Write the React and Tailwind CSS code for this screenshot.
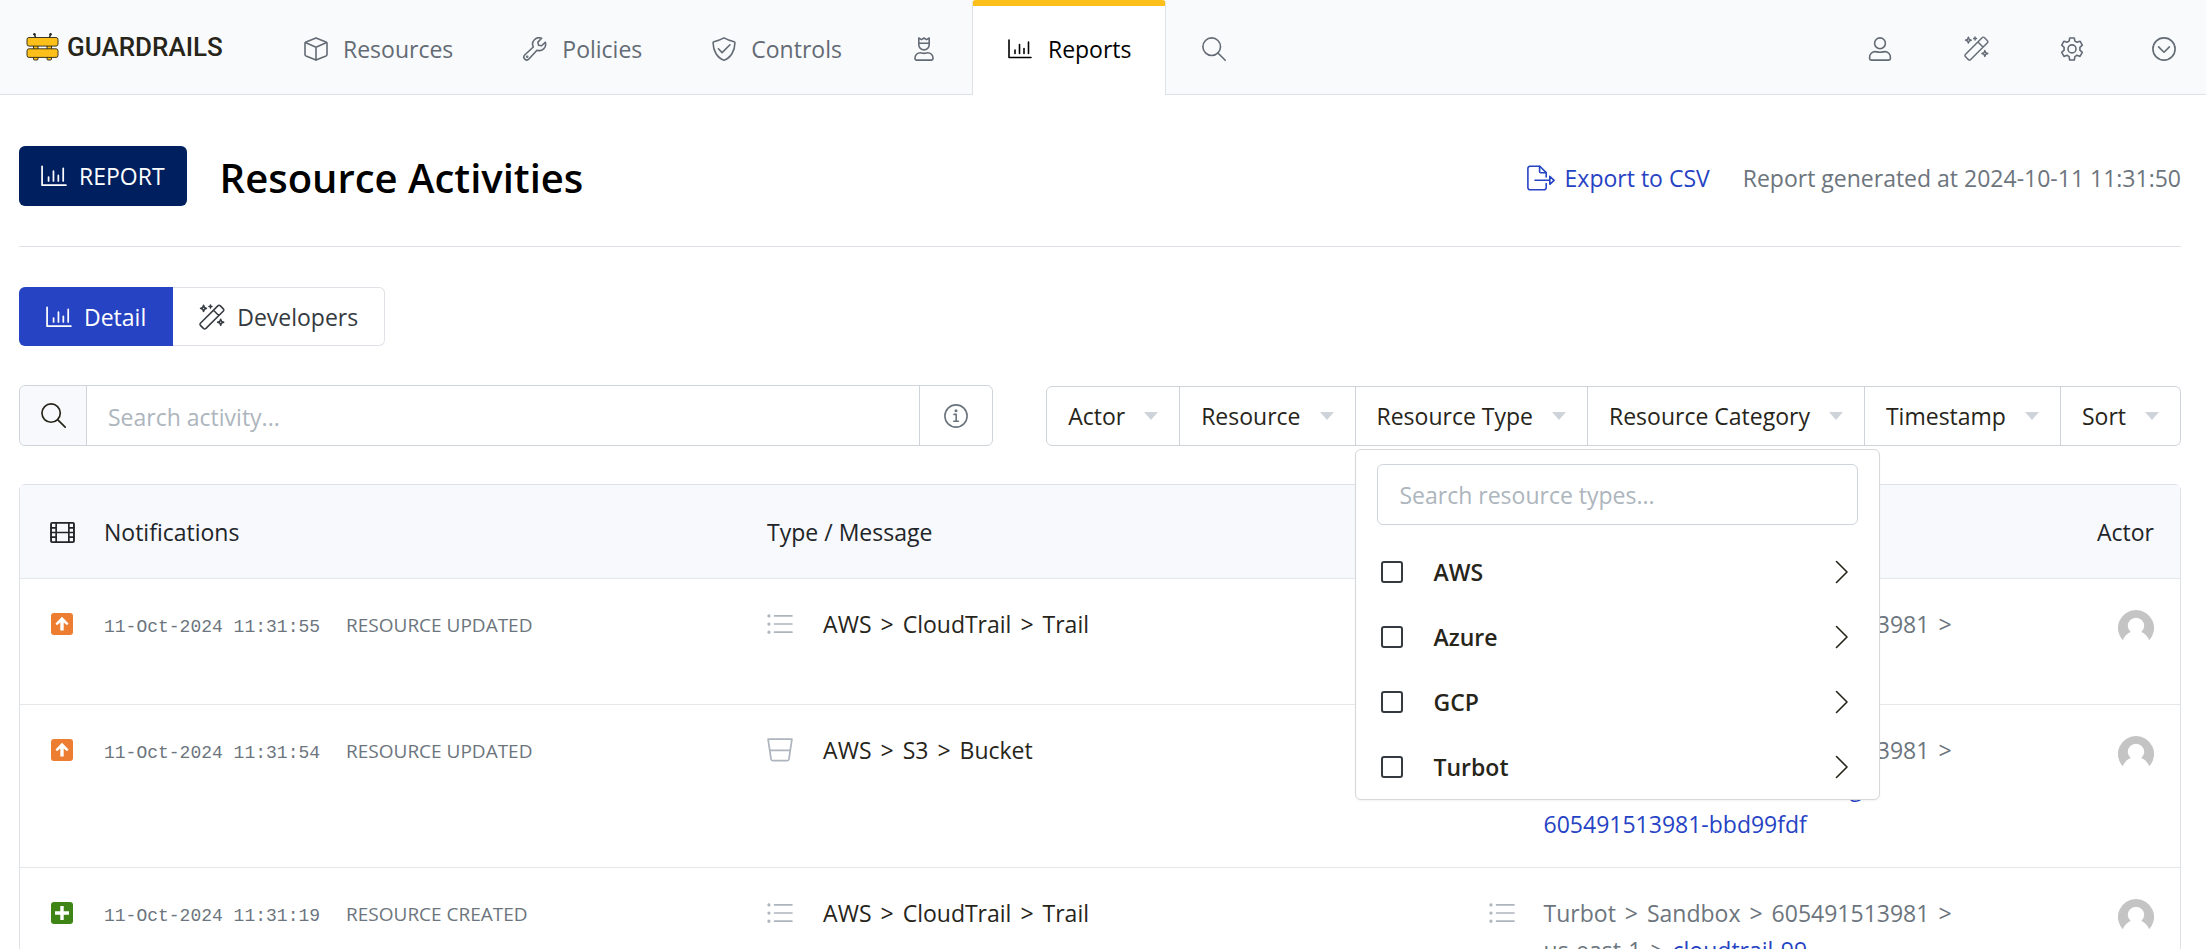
import React from "react";

function Icon({ children, className = "size-6", width = 1.6 }) {
  return (
    <svg
      viewBox="0 0 24 24"
      className={`shrink-0 ${className}`}
      fill="none"
      stroke="currentColor"
      strokeWidth={width}
      strokeLinecap="round"
      strokeLinejoin="round"
      aria-hidden="true"
    >
      {children}
    </svg>
  );
}

const CubeIcon = (p) => (
  <Icon {...p}>
    <path d="M12 .9 22 4.9c.6.3 1 .8 1 1.400v11.200c0 .7-.4 1.200-1 1.500L12 23.100l-10-4.100c-.6-.3-1-.8-1-1.500V6.300c0-.6.4-1.100 1-1.400z" />
    <path d="M1.400 5.500 12 10.200l10.600-4.700M12 10.200v12.700" />
  </Icon>
);

const WrenchIcon = (p) => (
  <Icon {...p}>
    <path d="M22.300 5.200a6.400 6.400 0 0 1-8.300 8L5.900 22a2.900 2.900 0 0 1-4.200-4L10.300 10A6.400 6.400 0 0 1 18.600 1.300l-3.700 3.800.6 3.100 3.100.6z" />
    <circle cx="4.200" cy="19.800" r=".5" />
  </Icon>
);

const ShieldIcon = (p) => (
  <Icon {...p}>
    <path d="M12 .9c3.200 1.800 6.600 3 10.100 3.900.5.100.8.500.8 1C23 14 18.500 21 12 23.200 5.500 21 1 14 1.100 5.800c0-.5.3-.9.800-1C5.400 3.900 8.800 2.700 12 .9z" />
    <path d="m6.400 11.800 3.700 3.800L18 7.800" />
  </Icon>
);

const CrownUserIcon = (p) => (
  <Icon {...p}>
    <path d="M6.800 1v6.700a5.200 5.200 0 0 0 10.400 0V1l-2.700 1.600L12 1 9.500 2.600zM6.800 6.200h10.400" />
    <path d="M8.300 15.700c1.300 0 1.600.7 3.700.7s2.400-.7 3.700-.7c2.900 0 5.300 2.300 5.300 5.300v.6c0 .9-.7 1.500-1.500 1.500h-15c-.8 0-1.500-.6-1.500-1.500V21c0-3 2.400-5.300 5.300-5.300z" />
  </Icon>
);

const ChartIcon = (p) => (
  <Icon {...p}>
    <path d="M1 3v17.500h22M7 16.500v-3.500M11.500 16.500v-9M16 16.500v-5M20.500 16.500V5" />
  </Icon>
);

const SearchIcon = (p) => (
  <Icon {...p}>
    <circle cx="9.700" cy="9.700" r="8.800" />
    <path d="m16.200 16.200 7 7" />
  </Icon>
);

const UserIcon = (p) => (
  <Icon {...p}>
    <circle cx="12" cy="6.300" r="5.400" />
    <path d="M7.200 14.600c1.400 0 2.200.7 4.800.7s3.400-.7 4.800-.7c3.100 0 5.600 2.500 5.600 5.600v1.300c0 .9-.7 1.600-1.600 1.600H3.200c-.9 0-1.600-.7-1.600-1.600v-1.300c0-3.100 2.500-5.600 5.600-5.600z" />
  </Icon>
);

const WandIcon = (p) => (
  <Icon {...p} width={1.4}>
    <path d="M17.600 1.500 1.300 17.800a1.300 1.300 0 0 0 0 1.900l3 3a1.300 1.300 0 0 0 1.900 0L22.500 6.400a1.300 1.300 0 0 0 0-1.900l-3-3a1.300 1.300 0 0 0-1.900 0zM13.400 5.800l4.800 4.800" />
    <path d="m4.200 1.200.8 2 2 .8-2 .8-.8 2-.8-2-2-.8 2-.8zM20 14l.8 2 2 .8-2 .8-.8 2-.8-2-2-.8 2-.8zM10.600 1v2.800M9.200 2.400H12" />
  </Icon>
);

const GearIcon = (p) => (
  <Icon {...p}>
    <path d="M9.700 1h4.600l.6 3.100 2.100 1.200 3-1.100 2.300 4-2.400 2.100v2.900l2.400 2.200-2.300 4-3-1.100-2.100 1.300-.6 3.400H9.700l-.6-3.400L7 18.300l-3 1.100-2.300-4 2.400-2.200v-2.900L1.700 8.200l2.300-4 3 1.100 2.100-1.200z" />
    <circle cx="12" cy="11.900" r="4" />
  </Icon>
);

const CircleDownIcon = (p) => (
  <Icon {...p}>
    <circle cx="12" cy="12" r="11.100" />
    <path d="m6.600 9.900 5.400 5.300 5.400-5.300" />
  </Icon>
);

const InfoIcon = (p) => (
  <Icon {...p}>
    <circle cx="12" cy="12" r="11.100" />
    <path d="M10 10.400h2.200v6.600M9.800 17.200h4.600" />
    <circle cx="12" cy="6.800" r=".7" fill="currentColor" />
  </Icon>
);

const ExportIcon = () => (
  <svg
    viewBox="0 0 28 26"
    className="h-[26px] w-7 shrink-0"
    fill="none"
    stroke="currentColor"
    strokeWidth="1.600"
    strokeLinecap="round"
    strokeLinejoin="round"
    aria-hidden="true"
  >
    <path d="M19.200 12V7.600L12.800 1.200H3A2.100 2.100 0 0 0 .9 3.300v19.400A2.100 2.100 0 0 0 3 24.800h14.100a2.100 2.100 0 0 0 2.100-2.100V18.500" />
    <path d="M12.600 1.400v5.200c0 .7.500 1.200 1.200 1.200h5.200M8 15.300h14.800M22.800 11.300v8l4.300-4z" />
  </svg>
);

const FilmIcon = (p) => (
  <Icon {...p}>
    <rect x="1" y="2.800" width="22" height="18.400" rx="1" strokeWidth="1.800" />
    <path d="M5.900 3v18M18.100 3v18M6 12h12M1 7.500h5M1 12h5M1 16.500h5M18 7.500h5M18 12h5M18 16.500h5" />
  </Icon>
);

const ListIcon = (p) => (
  <Icon {...p}>
    <path d="M7 4.500h16M7 12h16M7 19.500h16" />
    <g fill="currentColor" strokeWidth="1">
      <circle cx="1.800" cy="4.500" r="1" />
      <circle cx="1.800" cy="12" r="1" />
      <circle cx="1.800" cy="19.500" r="1" />
    </g>
  </Icon>
);

const BucketIcon = (p) => (
  <Icon {...p}>
    <path d="M1 2h22l-2.700 18.300a1.700 1.700 0 0 1-1.700 1.500H5.400a1.700 1.700 0 0 1-1.700-1.500zM2.700 12.400h18.600" />
  </Icon>
);

const ChevronIcon = (p) => (
  <Icon {...p}>
    <path d="m6.500 1.500 10.500 10.500L6.500 22.500" />
  </Icon>
);

function UpdatedBadge() {
  return (
    <svg viewBox="0 0 22 22" className="size-[22px]" aria-hidden="true">
      <rect width="22" height="22" rx="3" fill="#ed7d31" />
      <path d="M11 3.800 17.500 10.600 16 12.200l-3.300-2.600v7.900H9.300V9.600L6 12.200l-1.500-1.600z" fill="#fff" />
    </svg>
  );
}

function CreatedBadge() {
  return (
    <svg viewBox="0 0 22 22" className="size-[22px]" aria-hidden="true">
      <rect width="22" height="22" rx="3" fill="#3f8515" />
      <path d="M9.300 4h3.400v5.300H18v3.400h-5.300V18H9.300v-5.300H4V9.300h5.300z" fill="#fff" />
    </svg>
  );
}

function Avatar() {
  return (
    <svg viewBox="0 0 36 36" className="ml-auto size-9" role="img" aria-label="Actor">
      <path
        d="M18 0a18 18 0 0 0-13.200 30.300C6.300 26.400 9.200 23.400 12.700 22.100a8.200 8.200 0 1 1 10.600 0c3.500 1.300 6.400 4.300 7.900 8.200A18 18 0 0 0 18 0z"
        fill="#c4c4c4"
      />
    </svg>
  );
}

function Logo() {
  return (
    <a href="#" className="flex items-center gap-2 text-[#27251a]" aria-label="Guardrails">
      <svg viewBox="0 0 33 28" className="h-7 w-[33px]" aria-hidden="true">
        <path d="M9.500 4.500 8.500 1.200M23.500 4.500l1-3.300" stroke="#27251a" strokeWidth="1.400" />
        <circle cx="8.400" cy="1.300" r="1.200" fill="#27251a" />
        <circle cx="24.600" cy="1.300" r="1.200" fill="#27251a" />
        <g fill="#fdc01a" stroke="#27251a" strokeWidth=".9">
          <rect x="7.500" y="12" width="4.500" height="15" rx="1" />
          <rect x="21" y="12" width="4.500" height="15" rx="1" />
          <rect x="1" y="4.500" width="31" height="8.600" rx="2" />
          <rect x="1" y="15.800" width="31" height="8.600" rx="2" />
        </g>
      </svg>
      <span className="font-[Roboto] text-[26px] leading-8 font-medium">GUARDRAILS</span>
    </a>
  );
}

function NavItem({ icon, label, name }) {
  return (
    <a href="#" aria-label={name} className="flex items-center gap-[13px] px-[34px] pt-[3px]">
      <span className="flex w-7 justify-center">{icon}</span>
      {label}
    </a>
  );
}

function Header() {
  return (
    <header className="flex h-[95px] border-b border-[#dee2e6] bg-[#f9fafc] text-[#636b74]">
      <div className="flex w-[268px] shrink-0 items-center pl-[26px]">
        <Logo />
      </div>
      <nav className="flex grow">
        <NavItem icon={<CubeIcon />} label="Resources" />
        <NavItem icon={<WrenchIcon />} label="Policies" />
        <NavItem icon={<ShieldIcon />} label="Controls" />
        <NavItem icon={<CrownUserIcon />} name="Directory" />
        <a
          href="#"
          aria-current="page"
          className="-mb-px flex items-center gap-3.5 rounded-t border-x border-t-6 border-x-[#dee2e6] border-t-[#fdc01a] bg-white px-[33px] pb-1 text-black"
        >
          <span className="flex w-7 justify-center">
            <ChartIcon />
          </span>
          Reports
        </a>
        <NavItem icon={<SearchIcon />} name="Search" />
      </nav>
      <nav className="flex" aria-label="Account">
        <NavItem icon={<UserIcon />} name="Profile" />
        <NavItem icon={<WandIcon className="size-[25px]" />} name="Developers" />
        <NavItem icon={<GearIcon />} name="Settings" />
        <a href="#" aria-label="More" className="flex items-center pt-[3px] pr-[30px] pl-8">
          <CircleDownIcon />
        </a>
      </nav>
    </header>
  );
}

const TYPES = ["AWS", "Azure", "GCP", "Turbot"];

function TypeMenu() {
  return (
    <div className="absolute top-full left-0 z-10 -ml-px mt-1 w-[525px] rounded-md border border-[#d5d8db] bg-white px-[21px] pt-3.5 shadow-xs">
      <input
        type="text"
        aria-label="Search resource types"
        placeholder="Search resource types..."
        className="h-[61px] w-full rounded-md border border-[#ced4da] px-[22px] placeholder:text-[#adb5bd]"
      />
      <ul className="mt-3.5">
        {TYPES.map((t) => (
          <li key={t} className="flex h-[65px] items-center">
            <label className="flex grow items-center gap-[31px] pl-1 font-semibold">
              <input
                type="checkbox"
                className="size-[22px] appearance-none rounded-[3px] border-2 border-[#343a40] bg-white"
              />
              {t}
            </label>
            <button type="button" aria-label={`Expand ${t}`} className="px-1">
              <ChevronIcon />
            </button>
          </li>
        ))}
      </ul>
    </div>
  );
}

const FILTERS = ["Actor", "Resource", "Resource Type", "Resource Category", "Timestamp", "Sort"];

function Filters() {
  return (
    <div className="flex h-[60px] shrink-0 divide-x divide-[#ced4da] self-end rounded-md border border-[#ced4da] text-[#27251a]">
      {FILTERS.map((f) => (
        <div key={f} className="relative flex">
          <button type="button" className="flex items-center gap-[19px] px-[21px]">
            {f}
            <svg viewBox="0 0 14 8" className="h-2 w-3.5" aria-hidden="true">
              <path d="M0 0h14L7 8z" fill="#ced4da" />
            </svg>
          </button>
          {f === "Resource Type" && <TypeMenu />}
        </div>
      ))}
    </div>
  );
}

const OBJECT_PATH = ["Turbot", "Sandbox", "605491513981", "us-east-1"];

const ROWS = [
  {
    time: "11-Oct-2024 11:31:55",
    event: "RESOURCE UPDATED",
    type: ["AWS", "CloudTrail", "Trail"],
    link: "cloudtrail-99",
  },
  {
    time: "11-Oct-2024 11:31:54",
    event: "RESOURCE UPDATED",
    type: ["AWS", "S3", "Bucket"],
    link: "aws-cloudtrail-logs-605491513981-bbd99fdf",
    bucket: true,
  },
  {
    time: "11-Oct-2024 11:31:19",
    event: "RESOURCE CREATED",
    type: ["AWS", "CloudTrail", "Trail"],
    link: "cloudtrail-99",
    created: true,
  },
];

function Separator() {
  return (
    <>
      {" "}
      <span className="mx-[3px]">&gt;</span>{" "}
    </>
  );
}

function ActivityTable() {
  return (
    <div className="mt-[38px] rounded-t-md border border-[#dee2e6]">
      <table className="w-full table-fixed text-left">
        <colgroup>
          <col className="w-[84px]" />
          <col className="w-[30.7%]" />
          <col className="w-[33.4%]" />
          <col />
          <col className="w-[180px]" />
        </colgroup>
        <thead className="bg-[#f8f9fc] text-[#212529]">
          <tr className="h-[93px] border-b border-[#e5e8eb]">
            <th className="pt-0.5 pl-[30px]">
              <FilmIcon className="size-[25px]" />
            </th>
            <th className="pt-0.5 font-normal">Notifications</th>
            <th className="pt-0.5 font-normal">Type / Message</th>
            <th className="pt-0.5 font-normal">
              <span className="sr-only">Resource</span>
            </th>
            <th className="pt-0.5 pr-[26px] text-right font-normal">Actor</th>
          </tr>
        </thead>
        <tbody>
          {ROWS.map((r) => {
            const Kind = r.bucket ? BucketIcon : ListIcon;
            return (
              <tr key={r.time} className="border-b border-[#e5e8eb] align-top leading-[37px]">
                <td className="pt-[27px] pb-6 pl-[31px]">
                  <div className="flex h-[37px] items-center">
                    {r.created ? <CreatedBadge /> : <UpdatedBadge />}
                  </div>
                </td>
                <td className="pt-7 pb-6 text-[#6c757d]">
                  <div className="flex items-baseline gap-[26px] whitespace-nowrap">
                    <time className="font-['Liberation_Mono',monospace] text-[18px]">{r.time}</time>
                    <span className="text-[19px]">{r.event}</span>
                  </div>
                </td>
                <td className="pt-[27px] pb-6">
                  <div className="flex gap-[30px] text-[#27251a]">
                    <span className="flex h-[37px] items-center text-[#adb5bd]">
                      <Kind className="size-[26px]" />
                    </span>
                    <span>
                      {r.type.map((part, i) => (
                        <React.Fragment key={part}>
                          {i > 0 && <Separator />}
                          {part}
                        </React.Fragment>
                      ))}
                    </span>
                  </div>
                </td>
                <td className="pt-[27px] pb-6">
                  <div className="flex gap-[29px] text-[#6c757d]">
                    <span className="flex h-[37px] items-center text-[#adb5bd]">
                      <Kind className="size-[26px]" />
                    </span>
                    <span>
                      {OBJECT_PATH.map((part) => (
                        <React.Fragment key={part}>
                          <span className="whitespace-nowrap">{part}</span>
                          <Separator />
                        </React.Fragment>
                      ))}
                      <a href="#" className="text-[#2643c4]">
                        {r.link}
                      </a>
                    </span>
                  </div>
                </td>
                <td className="pt-[31px] pr-[26px]">
                  <Avatar />
                </td>
              </tr>
            );
          })}
        </tbody>
      </table>
    </div>
  );
}

export default function App() {
  return (
    <div className="h-screen overflow-hidden bg-white font-['Open_Sans','Noto_Sans',sans-serif] text-[23px] leading-9 text-[#27251a]">
      <Header />
      <main className="pr-[25px] pl-[19px]">
        <div className="flex items-center justify-between border-b border-[#dee2e6] pt-[51px] pb-10">
          <div className="flex items-center gap-[33px]">
            <span className="flex h-[60px] items-center gap-3 rounded-md bg-[#001f5f] px-[22px] text-white">
              <ChartIcon className="size-[26px]" />
              REPORT
            </span>
            <h1 className="pt-1 text-[40px] leading-[56px] font-semibold text-black">Resource Activities</h1>
          </div>
          <div className="flex items-center gap-[33px] pt-1 text-[#6c757d]">
            <a href="#" className="flex items-center gap-2.5 text-[#2643c4]">
              <ExportIcon />
              Export to CSV
            </a>
            <span>Report generated at 2024-10-11 11:31:50</span>
          </div>
        </div>

        <div className="mt-10 flex h-[59px]">
          <button type="button" className="flex items-center gap-3 rounded-l-md bg-[#2643c4] px-[27px] text-white">
            <ChartIcon className="size-[26px]" />
            Detail
          </button>
          <button
            type="button"
            className="flex items-center gap-3 rounded-r-md border border-l-0 border-[#dee2e6] px-[26px] text-[#343a40]"
          >
            <WandIcon className="size-[26px]" />
            Developers
          </button>
        </div>

        <div className="mt-[39px] flex gap-[53px]">
          <div className="flex h-[61px] grow rounded-md border border-[#ced4da]">
            <button
              type="button"
              aria-label="Search"
              className="flex w-[67px] items-center justify-center rounded-l-md border-r border-[#ced4da] bg-[#f8f9fc]"
            >
              <SearchIcon className="size-[25px]" />
            </button>
            <input
              type="text"
              aria-label="Search activity"
              placeholder="Search activity..."
              className="min-w-0 grow px-[21px] pt-0.5 placeholder:text-[#adb5bd]"
            />
            <button
              type="button"
              aria-label="Search help"
              className="flex w-[73px] items-center justify-center border-l border-[#ced4da] text-[#6c757d]"
            >
              <InfoIcon />
            </button>
          </div>
          <Filters />
        </div>

        <ActivityTable />
      </main>
    </div>
  );
}
